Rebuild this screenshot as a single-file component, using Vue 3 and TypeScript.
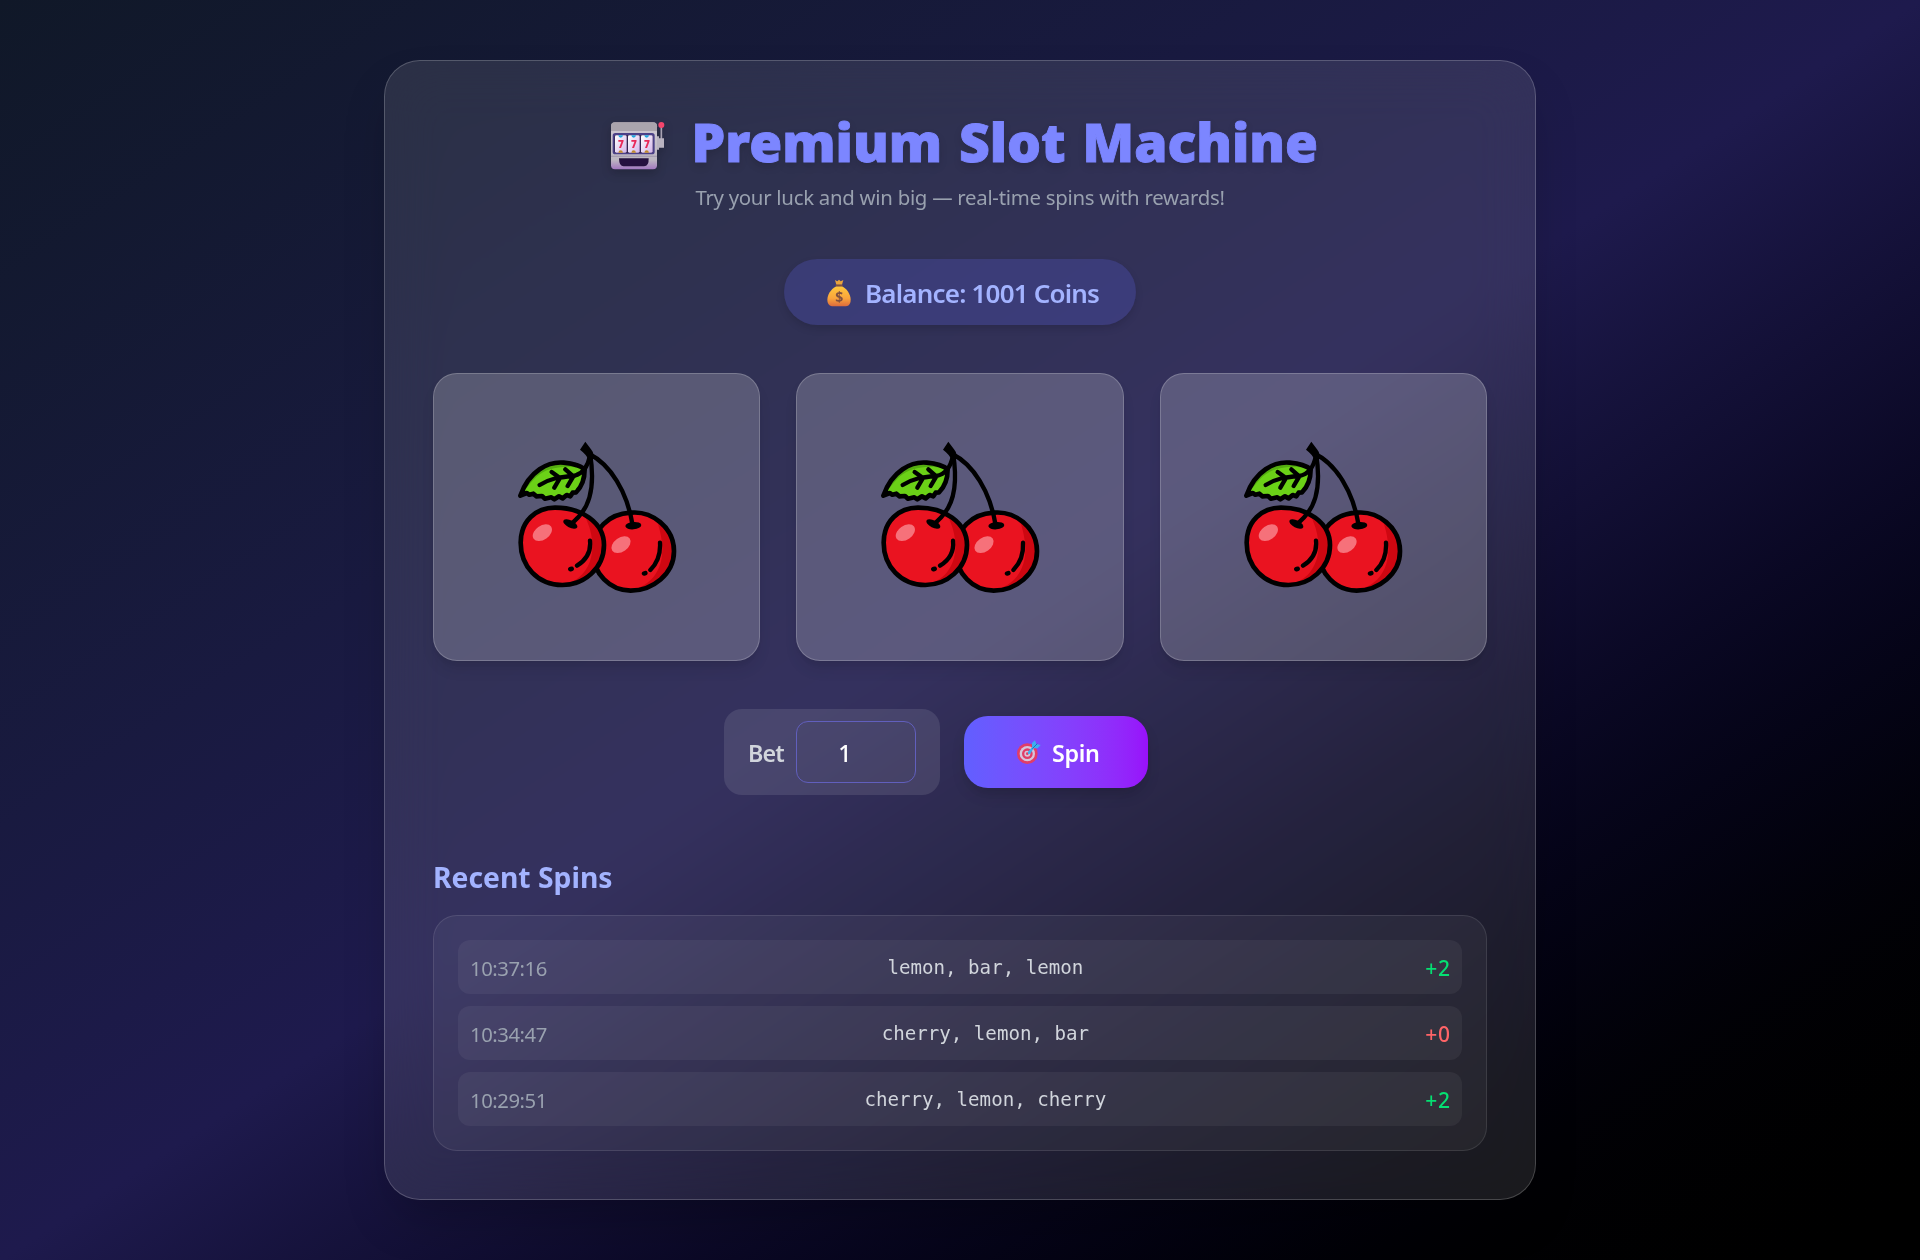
<script setup lang="ts">
import { ref } from 'vue'

interface Spin {
  time: string
  result: string
  win: number
}

const balance = ref(1001)
const bet = ref(1)
const reels = ['cherry', 'cherry', 'cherry']
const spins: Spin[] = [
  { time: '10:37:16', result: 'lemon, bar, lemon', win: 2 },
  { time: '10:34:47', result: 'cherry, lemon, bar', win: 0 },
  { time: '10:29:51', result: 'cherry, lemon, cherry', win: 2 },
]
</script>

<template>
  <main class="page">
    <section class="card">
      <h1 class="title">
        <svg class="slot-icon" viewBox="0 0 165 150" aria-hidden="true">
          <defs>
            <linearGradient id="body" x1="0" y1="0" x2="0" y2="1">
              <stop offset="0" stop-color="#a9a3ad" />
              <stop offset=".2" stop-color="#cbc5cf" />
              <stop offset=".8" stop-color="#bcb6c1" />
              <stop offset="1" stop-color="#a277c0" />
            </linearGradient>
            <linearGradient id="reelface" x1="0" y1="0" x2="1" y2="1">
              <stop offset="0" stop-color="#fff" />
              <stop offset="1" stop-color="#d3b4ea" />
            </linearGradient>
          </defs>
          <path d="M154 15V60" stroke="#a9a3b3" stroke-width="5" />
          <circle cx="154" cy="12" r="9" fill="#f4456c" />
          <path d="M137 46h10v6h15v28h-15v6h-10z" fill="#b9b3c0" />
          <rect x="3" y="4" width="138" height="141" rx="12" fill="url(#body)" />
          <path d="M3 30V16Q3 4 15 4h114q12 0 12 12v14z" fill="#aaa4ad" />
          <path d="M3 104h138v3H3z" fill="#9f96ad" />
          <rect x="8" y="36" width="126" height="64" rx="8" fill="#4b4088" />
          <rect x="13" y="42" width="116" height="54" rx="5" fill="#332551" />
          <g v-for="x in [15, 54, 93]" :key="x">
            <rect :x="x" y="43" width="35" height="52" rx="4" fill="url(#reelface)" />
            <path :d="`M${x + 10} 43h14q-1 7-7 7t-7-7`" fill="#20a5de" />
            <path :d="`M${x + 10} 95h14q-1-7-7-7t-7 7`" fill="#c08a2c" />
            <text :x="x + 17.5" y="80" class="seven">7</text>
          </g>
          <path d="M27 112h89q1 24-14 24H41q-14 0-14-24z" fill="#25113f" />
        </svg>
        <span class="title-text">Premium Slot Machine</span>
      </h1>
      <p class="subtitle"><span>Try your luck and win big — real-time spins with rewards!</span></p>

      <div class="balance">
        <svg class="bag-icon" viewBox="0 0 72 84" aria-hidden="true">
          <defs>
            <linearGradient id="bag" x1="0" y1="0" x2="0" y2="1">
              <stop offset="0" stop-color="#ffc83c" />
              <stop offset=".6" stop-color="#f9a43c" />
              <stop offset="1" stop-color="#dd6a3c" />
            </linearGradient>
          </defs>
          <path d="M24 3l7 4 5-5 5 5 8-4-4 14H28z" fill="#e8a33c" />
          <path d="M28 22h17C58 28 71 45 71 62c0 15-8 20-18 20H19C9 82 1 77 1 62 1 45 15 28 28 22z" fill="url(#bag)" />
          <path d="M26 17h21v5H26z" fill="#80503f" />
          <text x="36" y="68" class="dollar">$</text>
        </svg>
        <span class="balance-text">Balance: {{ balance }} Coins</span>
      </div>

      <div class="reels">
        <div v-for="(reel, i) in reels" :key="i" class="reel">
          <svg class="cherry" viewBox="-9 -1 600 555" role="img" :aria-label="reel">
            <path d="M392 262C455 256 522 305 522 378 522 446 458 496 392 496 330 496 279 445 279 380 279 310 325 266 392 262z" fill="#ea1320" />
            <path d="M468 278C497 300 522 334 522 378 522 446 458 496 392 496 476 474 512 400 468 278z" fill="#ce0711" />
            <path d="M392 262C455 256 522 305 522 378 522 446 458 496 392 496 330 496 279 445 279 380 279 310 325 266 392 262z" class="outline" />
            <path d="M62 352C62 287 108 247 165 247 242 247 312 289 312 359 312 430 251 479 187 479 113 479 62 422 62 352z" fill="#ea1320" />
            <path d="M253 269C288 288 312 317 312 359 312 430 251 479 187 479 267 464 306 376 253 269z" fill="#ce0711" />
            <path d="M62 352C62 287 108 247 165 247 242 247 312 289 312 359 312 430 251 479 187 479 113 479 62 422 62 352z" class="outline" />
            <ellipse cx="127" cy="322" rx="32" ry="21" transform="rotate(-35 127 322)" fill="#f6717a" />
            <ellipse cx="363" cy="358" rx="32" ry="21" transform="rotate(-35 363 358)" fill="#f6717a" />
            <ellipse cx="211" cy="296" rx="23" ry="11" transform="rotate(27 211 296)" />
            <ellipse cx="400" cy="301" rx="24" ry="11" transform="rotate(-5 400 301)" />
            <path d="M270 83Q290 206 245 263Q235 277 219 291M268 86C330 117 382 198 398 300" class="line" />
            <path d="M256 49L273 72Q281 80 282 94L265 103Q260 88 240 73z" />
            <path d="M61 211C88 136 145 108 191 112Q235 116 254 132Q254 176 228 201L218 202 211 213 200 209 188 219 177 213 163 222 154 216 135 220 126 212 109 213 100 205 88 208 80 203z" fill="#6bd117" />
            <path d="M61 211C88 136 145 108 191 112Q235 116 254 132C203 116 142 125 111 153 89 173 78 193 61 211z" fill="#54ad10" />
            <path d="M61 211C88 136 145 108 191 112Q235 116 254 132Q254 176 228 201L218 202 211 213 200 209 188 219 177 213 163 222 154 216 135 220 126 212 109 213 100 205 88 208 80 203z" class="outline" />
            <path d="M119 179C151 159 175 156 220 152Q259 145 270 91M155 140L180 158 163 187M196 132L220 153 203 182" class="line" />
            <path d="M270 346Q275 394 231 421M480 352Q483 402 451 434" class="line" />
            <ellipse cx="213" cy="431" rx="9" ry="7" transform="rotate(-20 213 431)" />
            <ellipse cx="434" cy="444" rx="9" ry="7" transform="rotate(-20 434 444)" />
          </svg>
        </div>
      </div>

      <div class="controls">
        <label class="bet">
          <span class="bet-label">Bet</span>
          <span class="bet-input">{{ bet }}</span>
        </label>
        <button class="spin" type="button">
          <svg class="target-icon" viewBox="0 0 72 72" aria-hidden="true">
            <circle cx="31" cy="41" r="31" fill="#e13d67" />
            <circle cx="31" cy="41" r="23" fill="#d5c6dc" />
            <circle cx="31" cy="41" r="16" fill="#e13d67" />
            <circle cx="31" cy="41" r="9" fill="#d5c6dc" />
            <circle cx="31" cy="41" r="4" fill="#e13d67" />
            <path d="M33 35L45 22V9L54 1l4 11 13 3-9 10H50L40 41 33 42z" fill="#3eaef0" />
            <path d="M46 26L61 11" stroke="#1676bd" stroke-width="3" />
          </svg>
          <span class="spin-text">Spin</span>
        </button>
      </div>

      <h2 class="heading"><span>Recent Spins</span></h2>
      <ul class="history">
        <li v-for="spin in spins" :key="spin.time" class="row">
          <span class="time">{{ spin.time }}</span>
          <span class="result">{{ spin.result }}</span>
          <span class="win" :class="{ none: spin.win === 0 }">+{{ spin.win }}</span>
        </li>
      </ul>
    </section>
  </main>
</template>

<style>
body {
  margin: 0;
  background: #000;
}
</style>

<style scoped>
* {
  box-sizing: border-box;
}
.page {
  height: 1260px;
  padding-top: 60px;
  display: flex;
  justify-content: center;
  align-items: flex-start;
  overflow: hidden;
  font-family: 'Noto Sans', 'Open Sans', sans-serif;
  background: linear-gradient(to bottom right in oklab, #101828, #1e1a4d, #000);
}
.card {
  width: 1152px;
  height: 1140px;
  padding: 48px;
  display: flex;
  flex-direction: column;
  align-items: center;
  border: 1px solid rgba(255, 255, 255, 0.2);
  border-radius: 36px;
  background: rgba(255, 255, 255, 0.1);
  backdrop-filter: blur(28px);
  box-shadow: 0 25px 50px -12px rgba(0, 0, 0, 0.25);
}
.title {
  margin: 0;
  height: 66px;
  width: 703px;
  display: flex;
  align-items: center;
  gap: 27px;
  white-space: nowrap;
  font-size: 53.4px;
  line-height: 66px;
  font-weight: 900;
  letter-spacing: 0;
  word-spacing: 3px;
  color: #7c86ff;
  -webkit-text-stroke: 0.9px #7c86ff;
  text-shadow: 0 4px 8px rgba(0, 0, 0, 0.15);
}
.slot-icon {
  width: 55px;
  height: 50px;
  margin-left: 1px;
  margin-top: 7px;
  flex: none;
  -webkit-text-stroke: 0;
  filter: drop-shadow(0 4px 5px rgba(0, 0, 0, 0.2));
}
.seven {
  font: 900 30px 'Noto Sans', sans-serif;
  fill: #e82959;
  text-anchor: middle;
  text-shadow: none;
}
.subtitle {
  margin: 6px 0 0;
  height: 32px;
  line-height: 32px;
  font-size: 20.4px;
  letter-spacing: -0.28px;
  white-space: nowrap;
  color: #99a1af;
}
.balance {
  margin-top: 46px;
  width: 352px;
  height: 66px;
  padding-left: 43px;
  display: flex;
  align-items: center;
  gap: 13px;
  flex: none;
  border-radius: 33px;
  background: rgba(82, 85, 200, 0.3);
  box-shadow: 0 4px 8px -1px rgba(0, 0, 0, 0.15);
  color: #a3b3ff;
  font-size: 26px;
  letter-spacing: -0.8px;
  font-weight: 600;
  white-space: nowrap;
}
.balance-text {
  padding-top: 2px;
  padding-left: 1px;
}
.bag-icon {
  width: 24px;
  height: 28px;
  flex: none;
  margin-top: 2px;
}
.dollar {
  font: 700 42px 'Noto Sans', sans-serif;
  fill: #80503f;
  text-anchor: middle;
}
.reels {
  margin-top: 48px;
  width: 100%;
  display: grid;
  grid-template-columns: repeat(3, 1fr);
  gap: 36px;
}
.reel {
  height: 288px;
  display: flex;
  align-items: center;
  justify-content: center;
  border: 1px solid rgba(255, 255, 255, 0.2);
  border-radius: 24px;
  background: rgba(255, 255, 255, 0.2);
  box-shadow: 0 10px 15px -3px rgba(0, 0, 0, 0.1), 0 4px 6px -4px rgba(0, 0, 0, 0.1);
}
.cherry {
  width: 200px;
  height: 185px;
  flex: none;
}
.outline {
  fill: none;
  stroke: #000;
  stroke-width: 14;
  stroke-linejoin: round;
}
.line {
  fill: none;
  stroke: #000;
  stroke-width: 13;
  stroke-linecap: round;
  stroke-linejoin: round;
}
.controls {
  margin-top: 48px;
  height: 86px;
  display: flex;
  align-items: center;
  gap: 24px;
  transform: translateX(-24px);
}
.bet {
  width: 216px;
  height: 86px;
  padding: 0 24px;
  display: flex;
  align-items: center;
  justify-content: space-between;
  border-radius: 18px;
  background: rgba(255, 255, 255, 0.1);
}
.bet-label {
  padding-top: 2px;
  font-size: 23.3px;
  letter-spacing: -0.9px;
  font-weight: 600;
  color: #d1d5dc;
}
.bet-input {
  width: 120px;
  height: 62px;
  padding-right: 22px;
  border: 1px solid #615fbd;
  border-radius: 12px;
  text-align: center;
  line-height: 62px;
  font-size: 23.3px;
  font-weight: 500;
  color: #fff;
}
.spin {
  width: 184px;
  height: 72px;
  padding: 0 0 0 53px;
  display: flex;
  align-items: center;
  gap: 11px;
  border: 0;
  border-radius: 24px;
  background: linear-gradient(to right in oklab, #615fff, #9810fa);
  box-shadow: 0 8px 15px -3px rgba(0, 0, 0, 0.2);
  font-family: inherit;
  font-size: 23.3px;
  letter-spacing: -0.3px;
  font-weight: 600;
  color: #fff;
}
.spin-text {
  padding-top: 2px;
}
.target-icon {
  width: 24px;
  height: 24px;
  flex: none;
}
.heading {
  align-self: flex-start;
  margin: 61px 0 0;
  height: 42px;
  line-height: 42px;
  font-size: 28.3px;
  font-weight: 700;
  white-space: nowrap;
  color: #a3b3ff;
}
.history {
  list-style: none;
  margin: 17px 0 0;
  padding: 24px;
  width: 100%;
  height: 236px;
  display: flex;
  flex-direction: column;
  gap: 12px;
  border: 1px solid rgba(255, 255, 255, 0.1);
  border-radius: 24px;
  background: rgba(255, 255, 255, 0.05);
}
.row {
  height: 54px;
  padding: 1px 12px 0;
  display: flex;
  align-items: center;
  justify-content: space-between;
  border-radius: 12px;
  background: rgba(255, 255, 255, 0.05);
  font-size: 20.3px;
  white-space: nowrap;
}
.time {
  letter-spacing: -0.45px;
  color: #99a1af;
}
.result {
  margin-right: 1.5px;
  font-family: 'DejaVu Sans Mono', 'Liberation Mono', monospace;
  font-size: 19.15px;
  color: #d1d5dc;
}
.win {
  font-size: 21px;
  letter-spacing: 0.6px;
  margin-right: -0.6px;
  font-weight: 500;
  color: #05df72;
}
.win.none {
  color: #ff6467;
}
</style>
